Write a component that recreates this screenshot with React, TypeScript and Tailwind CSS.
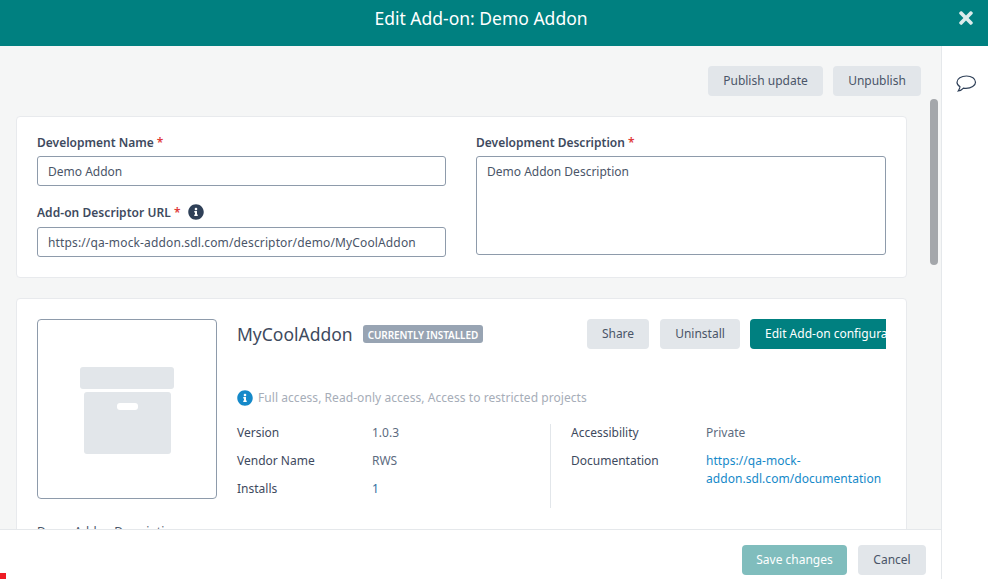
import { FaInfoCircle, FaTimes } from "react-icons/fa"

const Btn = ({ label, className }: { label: string; className: string }) => (
  <button className={`h-[30px] shrink-0 rounded-[4px] text-[12px] leading-[30px] whitespace-nowrap ${className}`}>{label}</button>
)

const Req = () => <span className="text-[#e03a3a]"> *</span>

const Row = ({ label, children }: { label: string; children: React.ReactNode }) => (
  <div className="flex mb-[10px]">
    <div className="w-[135px] shrink-0 text-[#3e4a5e]">{label}</div>
    <div className="min-w-0 flex-1 text-[#5c6b80]">{children}</div>
  </div>
)

export default function App() {
  return (
    <div className="relative flex h-[579px] w-[988px] flex-col overflow-hidden bg-white font-['Noto_Sans',sans-serif] text-[12px] leading-[18px] text-[#3e4a5e]">
      {/* header */}
      <div className="relative flex h-[46px] shrink-0 items-start justify-center bg-[#008080] pr-[26px] pt-[5px]">
        <h1 className="text-[17.5px] leading-[26px] text-white">Edit Add-on: Demo Addon</h1>
        <FaTimes className="absolute left-[956px] top-[8px] h-[20px] w-[20px] text-[#dcebeb]" />
      </div>

      <div className="flex min-h-0 flex-1">
        <div className="flex min-w-0 flex-1 flex-col border-r border-[#e5e8eb]">
          <div className="relative min-h-0 flex-1 overflow-hidden bg-[#f5f6f6] pl-4 pr-[34px] pt-5">
            <div className="absolute left-[930px] top-[53px] h-[166px] w-2 rounded bg-[#a4a7ab]" />

            <div className="mr-[-14px] flex justify-end gap-[10px]">
              <Btn label="Publish update" className="w-[115px] bg-[#e2e6ea] text-[#4a5568]" />
              <Btn label="Unpublish" className="w-[88px] bg-[#e2e6ea] text-[#4a5568]" />
            </div>

            {/* form card */}
            <div className="mt-5 flex h-[162px] gap-[30px] rounded border border-[#e8eaed] bg-white px-5 pt-[15px]">
              <div className="w-[409px]">
                <label className="block h-[24px] pt-px font-semibold leading-[20px] text-[#3e4a5e]">Development Name<Req /></label>
                <div className="h-[30px] rounded-[3px] border border-[#8e9bab] px-[10px] pt-px leading-[28px] text-[#4a5568]">Demo Addon</div>
                <label className="mt-[17px] flex h-[24px] items-start font-semibold leading-[20px] text-[#3e4a5e]">
                  <span className="tracking-[0.05px]">Add-on Descriptor URL<Req /></span>
                  <FaInfoCircle className="ml-[7px] mt-px h-[16px] w-[16px] text-[#2f4058]" />
                </label>
                <div className="h-[30px] rounded-[3px] border border-[#8e9bab] px-[10px] pt-px leading-[28px] tracking-[0.14px] text-[#4a5568]">https://qa-mock-addon.sdl.com/descriptor/demo/MyCoolAddon</div>
              </div>
              <div className="w-[410px]">
                <label className="block h-[24px] pt-px font-semibold leading-[20px] text-[#3e4a5e]">Development Description<Req /></label>
                <div className="h-[99px] rounded-[3px] border border-[#8e9bab] px-[10px] pt-[6px] text-[#4a5568]">Demo Addon Description</div>
              </div>
            </div>

            {/* addon card */}
            <div className="mt-5 h-[300px] rounded border border-[#e8eaed] bg-white px-5 pt-5">
              <div className="flex">
                <div className="flex h-[180px] w-[180px] shrink-0 flex-col items-center rounded border border-[#8e9bab] pt-[47px]">
                  <div className="h-[22px] w-[94px] rounded-[3px] bg-[#e2e6ea]" />
                  <div className="mt-[3px] flex h-[62px] w-[87px] justify-center rounded-[3px] bg-[#e2e6ea] pt-[11px]">
                    <div className="h-[7px] w-[21px] rounded-[3px] bg-white" />
                  </div>
                </div>

                <div className="ml-5 min-w-0 flex-1">
                  <div className="flex h-[30px] items-center overflow-hidden">
                    <span className="text-[17.5px] leading-[30px] text-[#3e4a5e]">MyCoolAddon</span>
                    <span className="ml-[10px] h-[18px] shrink-0 rounded-[3px] bg-[#98a4b3] px-[5px] text-[10px] font-semibold leading-[20px] tracking-[-0.1px] text-white">CURRENTLY INSTALLED</span>
                    <div className="ml-auto flex w-[299px] shrink-0 gap-[11px] overflow-hidden">
                      <Btn label="Share" className="w-[62px] bg-[#e2e6ea] text-[#4a5568]" />
                      <Btn label="Uninstall" className="w-[80px] bg-[#e2e6ea] text-[#4a5568]" />
                      <Btn label="Edit Add-on configuration" className="-ml-px w-[180px] rounded-r-none bg-[#008080] pl-[15px] text-left text-white" />
                    </div>
                  </div>

                  <div className="mt-[40px] flex h-[18px] items-center tracking-[0.06px] text-[#a6adb8]">
                    <FaInfoCircle className="mr-[5px] h-[16px] w-[16px] shrink-0 text-[#1589c9]" />
                    Full access, Read-only access, Access to restricted projects
                  </div>

                  <div className="mt-[17px] flex">
                    <div className="h-[84px] w-[314px] shrink-0 border-r border-[#e2e6ea]">
                      <Row label="Version">1.0.3</Row>
                      <Row label="Vendor Name">RWS</Row>
                      <Row label="Installs"><span className="text-[#2f6f9f]">1</span></Row>
                    </div>
                    <div className="ml-5 min-w-0 flex-1">
                      <Row label="Accessibility">Private</Row>
                      <Row label="Documentation"><span className="tracking-[0.05px] text-[#1589c9]">https://qa-mock-addon.sdl.com/documentation</span></Row>
                    </div>
                  </div>
                </div>
              </div>
              <p className="mt-[15px] text-[#4a5568]">Demo Addon Description</p>
            </div>
          </div>

          {/* footer */}
          <div className="flex h-[50px] shrink-0 items-start justify-end gap-[11px] border-t border-[#e5e8eb] bg-white pr-[15px] pt-[15px]">
            <Btn label="Save changes" className="w-[105px] bg-[#80bdbd] text-white" />
            <Btn label="Cancel" className="w-[68px] bg-[#e2e6ea] text-[#4a5568]" />
          </div>
        </div>

        {/* right rail */}
        <div className="w-[46px] shrink-0 bg-white pl-[14px] pt-[29px]">
          <svg width="21" height="18" viewBox="0 0 21 18" fill="none" stroke="#2f4058" strokeWidth="1.2">
            <path d="M10.5 1C5.3 1 1 3.600 1 7.200c0 1.900 1.200 3.500 3 4.600-.2 1.600-1 3-1.800 4.200 2-.3 4-1.400 5.300-2.900.9.2 1.700.3 2.500.3 5.200 0 9.500-2.700 9.500-6.200S15.700 1 10.500 1z" />
          </svg>
        </div>
      </div>

      <div className="absolute bottom-0 left-0 h-[6px] w-[6px] bg-[#ee1c25]" />
    </div>
  )
}
